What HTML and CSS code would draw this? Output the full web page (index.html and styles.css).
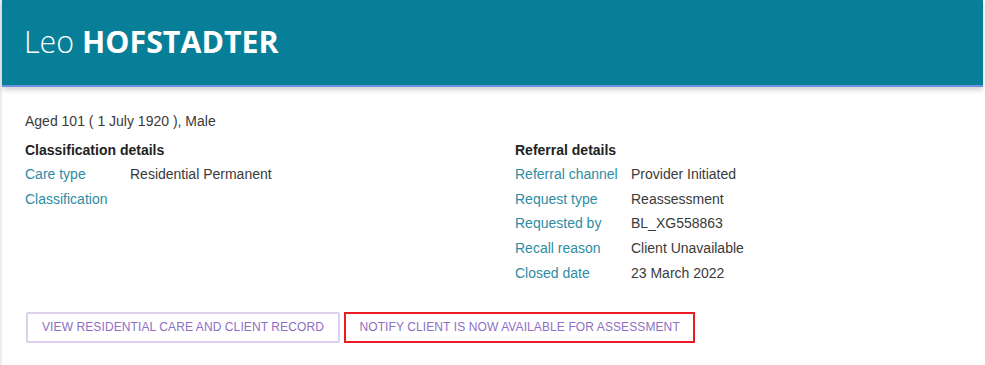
FILE: index.html
```html
<!DOCTYPE html>
<html lang="en">
<head>
    <meta charset="UTF-8">
    <meta name="viewport" content="width=device-width, initial-scale=1.0">
    <title>Leo HOFSTADTER</title>
    <link rel="stylesheet" href="styles.css">
</head>
<body>

    <div class="page">
        <header class="client-header">
            <h1><span class="first-name">Leo</span> <span class="last-name">HOFSTADTER</span></h1>
        </header>

        <div class="content">
            <p class="age">Aged 101 ( 1 July 1920 ), Male</p>

            <div class="columns">
                <div class="details">
                    <h3>Classification details</h3>
                    <div class="row"><span class="label">Care type</span><span class="value">Residential Permanent</span></div>
                    <div class="row"><span class="label">Classification</span><span class="value"></span></div>
                </div>
                <div class="details referral">
                    <h3>Referral details</h3>
                    <div class="row"><span class="label">Referral channel</span><span class="value">Provider Initiated</span></div>
                    <div class="row"><span class="label">Request type</span><span class="value">Reassessment</span></div>
                    <div class="row"><span class="label">Requested by</span><span class="value">BL_XG558863</span></div>
                    <div class="row"><span class="label">Recall reason</span><span class="value">Client Unavailable</span></div>
                    <div class="row"><span class="label">Closed date</span><span class="value">23 March 2022</span></div>
                </div>
            </div>

            <div class="actions">
                <button class="btn">View residential care and client record</button>
                <button class="btn btn-highlight">Notify client is now available for assessment</button>
            </div>
        </div>
    </div>

</body>
</html>
```

FILE: styles.css
```css
body {
    margin: 0;
    font-family: "Liberation Sans", Arial, sans-serif;
    background-color: #ffffff;
    color: #3a3a3a;
}
.page {
    width: 981px;
    border-left: 2px solid #ececec;
    min-height: 365px;
}
.client-header {
    background-color: #077f98;
    height: 85px;
    border-bottom: 2px solid #6a93e2;
    box-shadow: 0 3px 5px rgba(0, 0, 0, 0.18);
    display: flex;
    align-items: center;
    padding-left: 22px;
}
.client-header h1 {
    margin: 0;
    color: white;
    font-family: "Open Sans", "Liberation Sans", sans-serif;
    font-size: 30.4px;
    letter-spacing: 0;
    padding-bottom: 2px;
}
.first-name {
    font-weight: 300;
}
.last-name {
    font-weight: 700;
}
.content {
    padding: 26px 23px 0;
    font-size: 14px;
}
.age {
    margin: 0 0 10px;
    line-height: 16px;
}
.columns {
    display: grid;
    grid-template-columns: 490px 1fr;
}
.details h3 {
    margin: 0 0 1px;
    font-size: 14px;
    line-height: 22px;
    color: #222222;
}
.row {
    display: flex;
    line-height: 24.7px;
}
.label {
    color: #2f8ca3;
    width: 105px;
}
.referral .label {
    width: 116px;
}
.actions {
    display: flex;
    gap: 4px;
    margin-top: 26px;
    padding-left: 1px;
}
.btn {
    font-family: "Liberation Sans", Arial, sans-serif;
    font-size: 12px;
    text-transform: uppercase;
    color: #8d6fc4;
    background: white;
    border: 2px solid #ddd0ee;
    border-radius: 2px;
    height: 31px;
    padding: 0 14px;
    letter-spacing: 0.1px;
    cursor: pointer;
}
.btn-highlight {
    border-color: #ec1c24;
    border-radius: 0;
    padding: 0 13.5px;
}
```
